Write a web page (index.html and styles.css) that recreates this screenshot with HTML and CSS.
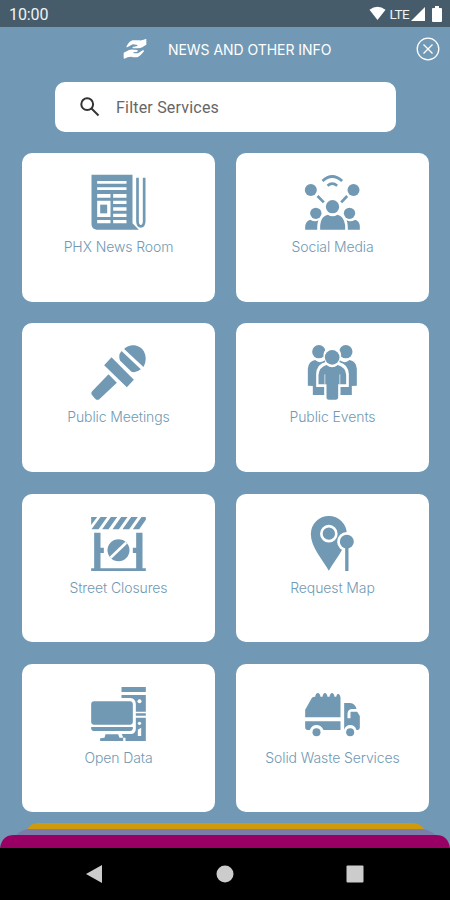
FILE: index.html
```
<!DOCTYPE html>
<html lang="en">
<head>
    <meta charset="UTF-8">
    <meta name="viewport" content="width=device-width, initial-scale=1.0">
    <title>News and Other Info</title>
    <link rel="stylesheet" href="styles.css">
</head>
<body>
    <div class="screen">
        <!-- Status bar -->
        <div class="status-bar">
            <span class="time">10:00</span>
            <svg class="wifi" width="17" height="15" viewBox="0 0 18 15"><path d="M0.5 3.5Q9-3 17.500 3.500L9 14.500Z"/></svg>
            <span class="network">LTE</span>
            <svg class="signal" width="14" height="14" viewBox="0 0 14 14"><path d="M14 0V14H0Z"/></svg>
            <svg class="battery" width="10" height="16" viewBox="0 0 10 16"><path d="M3 0h4v2h2q1 0 1 1v12q0 1-1 1H1q-1 0-1-1V3q0-1 1-1h2Z"/></svg>
        </div>

        <!-- Header -->
        <div class="header">
            <svg class="hands" width="24" height="20" viewBox="0 0 72 60">
                <path d="M10 23Q18 7 29 4L49 4Q57 5 68 0L70 0V17Q63 20 58 25Q52 28 44 28H31Q27 27 29 24L43 21Q45 17 40 17L29 16L14 24Q10 26 10 23Z"/>
                <path d="M2 41Q12 37 18 33Q25 30 34 32L43 33Q46 35 43 38L31 40Q30 43 34 43L45 43L59 34Q64 33 63 37Q54 49 45 54Q34 56 24 53Q14 53 4 59L2 58Z"/>
            </svg>
            <h1>NEWS AND OTHER INFO</h1>
            <svg class="close" width="24" height="24" viewBox="0 0 24 24"><circle cx="12" cy="12" r="10.800"/><path d="M7.500 7.500l9 9M16.500 7.500l-9 9"/></svg>
        </div>

        <!-- Search -->
        <div class="search">
            <svg width="22" height="22" viewBox="0 0 22 22"><circle cx="8.200" cy="8.200" r="5.900"/><path d="M12.500 12.500l7 7"/></svg>
            <span>Filter Services</span>
        </div>

        <!-- Services -->
        <div class="grid">
            <div class="card">
                <svg class="icon" viewBox="33.5 24 180 180">
                    <path fill-rule="evenodd" d="M41 29H164V175L183 194H56Q41 192 41 178ZM58 48V56H146V48ZM58 67V75H146V67ZM58 87V98H98V87ZM106 87V98H146V87ZM58 107V156H98V107ZM106 107V117H146V107ZM106 127V137H146V127ZM106 146V156H146V146ZM58 165V175H98V165ZM106 165V175H146V165Z"/>
                    <path d="M67 119h21v26H67Z"/>
                    <path class="line" stroke-width="8" d="M179 38V170Q180 184 189 184Q198 184 199 170V38"/>
                </svg>
                <p>PHX News Room</p>
            </div>
            <div class="card">
                <svg class="icon" viewBox="33.5 24 180 180">
                    <circle cx="57" cy="75" r="18"/><circle cx="185" cy="75" r="18"/>
                    <circle cx="122" cy="125" r="20"/><circle cx="72" cy="145" r="17"/><circle cx="173" cy="145" r="17"/>
                    <path d="M85 194V181Q87 153 108 149Q122 159 137 149Q157 154 160 181V194ZM40 194V184Q41 169 55 164Q69 172 80 166Q76 174 76 194ZM168 194Q168 174 164 166Q178 172 190 164Q204 169 204 184V194Z"/>
                    <path class="line" stroke-width="8" d="M77 93L96 112M166 93L148 112M92 48Q121 21 151 48M107 62Q121 50 136 62"/>
                </svg>
                <p>Social Media</p>
            </div>
            <div class="card">
                <svg class="icon" viewBox="33.5 24 180 180">
                    <path d="M139 42C156 23 188 29 198 49Q210 72 197 96ZM131 48L189 103Q174 115 161 110L127 77Q120 60 131 48ZM101 67L168 134L147 157L79 91ZM92 118L117 143L66 191Q59 198 52 191L43 181Q38 175 43 169Z"/>
                </svg>
                <p>Public Meetings</p>
            </div>
            <div class="card">
                <svg class="icon" viewBox="33.5 24 180 180">
                    <circle cx="81" cy="50" r="20"/><circle cx="162" cy="50" r="20"/>
                    <path d="M48 152V101Q50 78 70 75Q83 88 101 75V180H63V153Z"/>
                    <path d="M195 152V101Q193 78 173 75Q160 88 142 75V180H180V153Z"/>
                    <path class="gap" d="M121 37C96 37 88 60 101 81Q73 88 73 118V156H97V200H146V156H171V118Q170 88 142 81C155 60 147 37 121 37Z"/>
                    <circle cx="121" cy="67" r="22"/>
                    <path d="M80 148V119Q82 97 104 90Q121 104 138 90Q161 97 163 119V148H139V188Q138 194 132 194H111Q104 194 104 188V148Z"/>
                    <path class="line white" stroke-width="2" d="M99 118V148M144 118V148"/>
                </svg>
                <p>Public Events</p>
            </div>
            <div class="card">
                <svg class="icon" viewBox="33.5 24 180 180">
                    <path d="M40 33H58L40 57ZM68 33H88L62 70H41ZM99 33H118L92 70H73ZM130 33H149L123 70H104ZM160 33H180L154 70H134ZM191 33H204V41L184 70H165Z"/>
                    <path d="M49 80H68V125H78V141H68V187H175V141H165V125H175V80H194V187H204V195H40V187H49Z"/>
                    <circle cx="122" cy="133" r="33"/>
                    <path class="line white" stroke-width="8" d="M98 155L145 110"/>
                </svg>
                <p>Street Closures</p>
            </div>
            <div class="card">
                <svg class="icon" viewBox="33.5 24 180 180">
                    <path d="M111 194C94 163 57 124 57 84A54 54 0 0 1 165 84C165 124 128 163 111 194Z"/>
                    <circle class="ring" cx="111" cy="83" r="22.500"/>
                    <circle class="gap" cx="165" cy="107" r="29"/>
                    <path class="gap" d="M152 125H178V197H152Z"/>
                    <circle cx="165" cy="107" r="21"/>
                    <path d="M160 122H170V195H160Z"/>
                </svg>
                <p>Request Map</p>
            </div>
            <div class="card">
                <svg class="icon" viewBox="33.5 24 180 180">
                    <path d="M131 33H204V48H131ZM131 57H204V107H174V84Q173 67 158 66H131ZM174 112H204V119H174ZM174 125H204V195H143V185H136L132 174H161Q174 171 174 158Z"/>
                    <rect x="40" y="76" width="125" height="70" rx="9"/>
                    <path d="M40 153H165V158Q164 165 157 165H50Q41 165 40 158ZM83 175H121L125 185H136V195H67V187L80 185Z"/>
                    <circle class="white-fill" cx="185" cy="76" r="6"/><circle class="white-fill" cx="185" cy="142" r="5"/>
                    <path class="white-fill" d="M180 161L190 155V180H180Z"/>
                </svg>
                <p>Open Data</p>
            </div>
            <div class="card">
                <svg class="icon" viewBox="33.5 24 180 180">
                    <path d="M40 124V101L60 66Q62 62 70 62Q72 51 78 51Q84 51 86 62H92Q94 51 99 51Q105 51 107 62H113Q115 51 121 51Q126 51 128 62H133Q135 53 139 53Q144 54 146 64V124ZM40 136H146V162H95Q88 147 74 147Q60 147 54 162H46Q40 161 40 155ZM157 81H175Q190 83 194 99H179Q168 101 167 113V127H204V155Q203 162 197 162H194Q189 147 175 147Q162 147 157 161ZM176 107H196L204 120V127H176Z"/>
                    <circle cx="74" cy="169" r="12"/><circle cx="175" cy="169" r="12"/>
                </svg>
                <p>Solid Waste Services</p>
            </div>
        </div>

        <!-- Stacked tabs peeking out at the bottom -->
        <svg class="tabs" width="450" height="26" viewBox="0 0 450 26">
            <path fill="#d09b0b" d="M27 8Q31 1 38 1H413Q420 1 425 8Z"/>
            <path fill="#7c7ca9" d="M15 14Q21 8 28 7H423Q430 8 437 14Z"/>
            <path fill="#990063" d="M0 26Q2 13 14 13H436Q448 13 450 26Z"/>
        </svg>

        <!-- Android navigation -->
        <div class="nav-bar">
            <svg width="18" height="18" viewBox="0 0 18 18"><path d="M17 0V18L1 9Z"/></svg>
            <svg width="18" height="18" viewBox="0 0 18 18"><circle cx="9" cy="9" r="8.500"/></svg>
            <svg width="18" height="18" viewBox="0 0 18 18"><rect x="0.500" y="0.500" width="17" height="17" rx="1"/></svg>
        </div>
    </div>
</body>
</html>
```
FILE: styles.css
```
* {
    box-sizing: border-box;
}
body {
    margin: 0;
    font-family: Inter, sans-serif;
}
svg {
    display: block;
    flex-shrink: 0;
}
.screen {
    width: 450px;
    height: 900px;
    display: flex;
    flex-direction: column;
    background: #7199b5;
    overflow: hidden;
}
.status-bar {
    height: 27px;
    padding: 0 8px 0 9px;
    display: flex;
    align-items: center;
    background: #465c6b;
    color: #f0f3f5;
    font-family: Roboto, sans-serif;
}
.status-bar svg {
    fill: #fff;
}
.time {
    font-size: 16px;
    letter-spacing: -0.1px;
    margin-right: auto;
    padding-top: 1px;
}
.network {
    font-size: 13.5px;
    letter-spacing: -0.6px;
    margin: 0 2px 0 4px;
}
.battery {
    margin-left: 7px;
}
.header {
    height: 55px;
    padding: 0 10px 11px 123px;
    display: flex;
    align-items: center;
}
.hands {
    fill: #fff;
}
.header h1 {
    margin: 1px auto 0 21px;
    color: #fff;
    font-size: 14px;
    font-weight: 400;
    letter-spacing: -0.05px;
    white-space: nowrap;
}
.close {
    fill: none;
    stroke: #fff;
    stroke-width: 1.3;
}
.search {
    width: 341px;
    height: 50px;
    margin-left: 55px;
    padding-left: 24px;
    display: flex;
    align-items: center;
    gap: 15px;
    flex-shrink: 0;
    border-radius: 10px;
    background: #fff;
    color: #666;
    font-family: Roboto, sans-serif;
    font-size: 16px;
    letter-spacing: 0.2px;
}
.search svg {
    fill: none;
    stroke: #333;
    stroke-width: 2;
}
.grid {
    margin: 21px 21px 0 22px;
    display: grid;
    grid-template-columns: 193px 193px;
    grid-auto-rows: 148.6px;
    gap: 21.7px 21px;
}
.card {
    padding-top: 20px;
    display: flex;
    flex-direction: column;
    align-items: center;
    border-radius: 10px;
    background: #fff;
}
.card p {
    margin: 4px 0 0;
    color: #7199b3;
    font-size: 14px;
    font-weight: 300;
    line-height: 20px;
    letter-spacing: -0.1px;
    white-space: nowrap;
}
.icon {
    width: 60px;
    height: 60px;
    fill: #7199b3;
}
.icon .line {
    fill: none;
    stroke: #7199b3;
}
.icon .white {
    stroke: #fff;
}
.icon .gap,
.icon .white-fill {
    fill: #fff;
}
.icon .ring {
    fill: none;
    stroke: #fff;
    stroke-width: 8;
}
.tabs {
    margin-top: auto;
}
.nav-bar {
    height: 52px;
    padding: 0 86px 0 85px;
    display: flex;
    justify-content: space-between;
    align-items: center;
    flex-shrink: 0;
    background: #000;
}
.nav-bar svg {
    fill: #ccc;
}
```
